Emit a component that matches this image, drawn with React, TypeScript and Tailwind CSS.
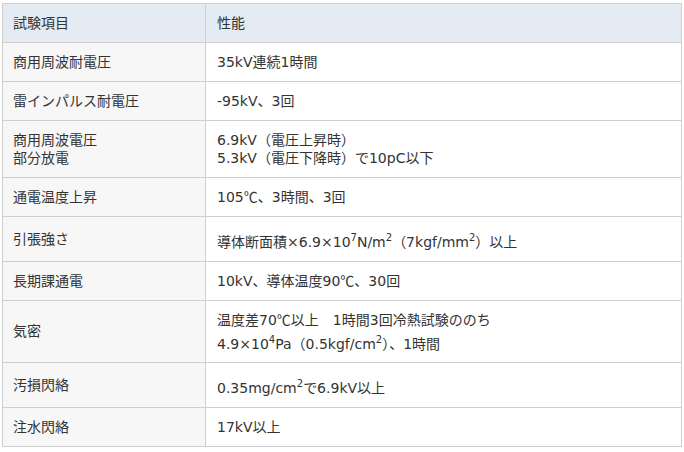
import React from 'react';

type Row = {
  label: React.ReactNode;
  value: React.ReactNode;
};

const Sup = ({ children }: { children: React.ReactNode }) => (
  <sup className="static align-super text-[10px] leading-[22px]">{children}</sup>
);

// full-width degree sign, as the CJK font draws it
const Deg = () => (
  <span className="leading-[12px]" style={{ fontFamily: '"Noto Sans CJK JP", sans-serif' }}>
    ℃
  </span>
);

const rows: Row[] = [
  { label: '商用周波耐電圧', value: '35kV連続1時間' },
  { label: '雷インパルス耐電圧', value: '-95kV、3回' },
  {
    label: (
      <>
        商用周波電圧
        <br />
        部分放電
      </>
    ),
    value: (
      <>
        6.9kV（電圧上昇時）
        <br />
        5.3kV（電圧下降時）で10pC以下
      </>
    ),
  },
  {
    label: '通電温度上昇',
    value: (
      <>
        105<Deg />、3時間、3回
      </>
    ),
  },
  {
    label: '引張強さ',
    value: (
      <>
        導体断面積×6.9×10<Sup>7</Sup>N/m<Sup>2</Sup>（7kgf/mm<Sup>2</Sup>）以上
      </>
    ),
  },
  {
    label: '長期課通電',
    value: (
      <>
        10kV、導体温度90<Deg />、30回
      </>
    ),
  },
  {
    label: '気密',
    value: (
      <>
        温度差70<Deg />以上　1時間3回冷熱試験ののち
        <br />
        4.9×10<Sup>4</Sup>Pa（0.5kgf/cm<Sup>2</Sup>）、1時間
      </>
    ),
  },
  {
    label: '汚損閃絡',
    value: (
      <>
        0.35mg/cm<Sup>2</Sup>で6.9kV以上
      </>
    ),
  },
  { label: '注水閃絡', value: '17kV以上' },
];

export default function App() {
  return (
    <div
      className="w-[684px] h-[452px] bg-white pt-[3px] pl-[2px] text-[#333] text-[14px] leading-[18px]"
      style={{ fontFamily: '"DejaVu Sans", "Noto Sans CJK JP", sans-serif' }}
    >
      <table className="w-[680px] border-collapse border border-[#cfcfcf]">
        <thead>
          <tr className="bg-[#e4ebf3]">
            <th className="w-[203px] h-[39px] border border-[#cfcfcf] px-[10px] py-[10px] text-left font-normal align-middle">
              試験項目
            </th>
            <th className="border border-[#cfcfcf] px-[11px] py-[10px] text-left font-normal align-middle">
              性能
            </th>
          </tr>
        </thead>
        <tbody>
          {rows.map((r, i) => (
            <tr key={i}>
              <td className="border border-[#cfcfcf] bg-[#f7f7f7] px-[10px] py-[10px] align-middle">
                {r.label}
              </td>
              <td className="border border-[#cfcfcf] bg-white px-[11px] py-[10px] align-middle">
                {r.value}
              </td>
            </tr>
          ))}
        </tbody>
      </table>
    </div>
  );
}
